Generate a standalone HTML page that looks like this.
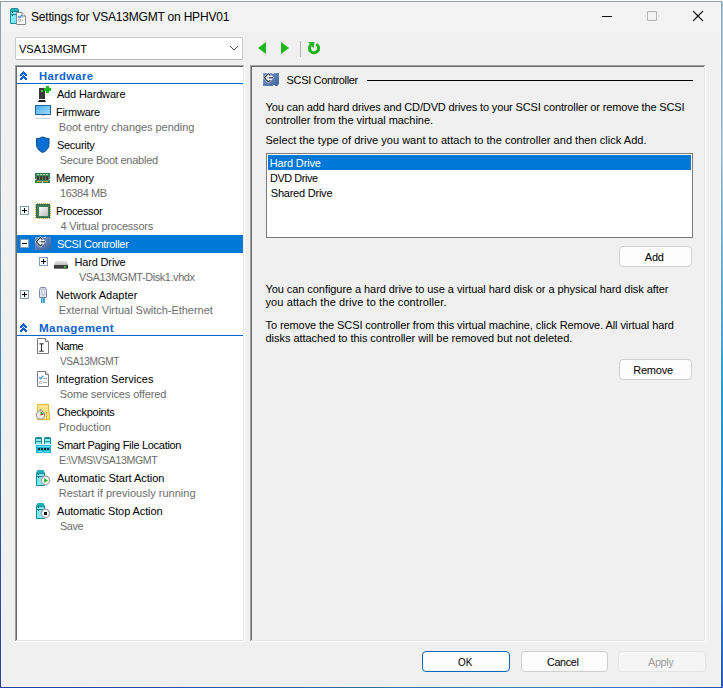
<!DOCTYPE html>
<html><head><meta charset="utf-8"><style>
html,body{margin:0;padding:0;width:723px;height:688px;overflow:hidden;background:#fff;}
body{position:relative;font-family:"Liberation Sans", sans-serif;}
.t{position:absolute;white-space:pre;font-family:"Liberation Sans", sans-serif;}
svg{position:absolute;overflow:visible}
</style></head><body>
<div style="position:absolute;left:0px;top:1px;width:722px;height:687px;background:#f0f0f0"></div>
<div style="position:absolute;left:2px;top:3px;width:718px;height:29px;background:#f3f3f3"></div>
<div style="position:absolute;left:0px;top:1px;width:722px;height:1px;background:#8aa4b4"></div>
<div style="position:absolute;left:0px;top:1px;width:1px;height:687px;background:linear-gradient(#8aa4b4 0px,#8a9cb0 150px,#3080c0 400px,#2850a0 550px,#2040a0 687px)"></div>
<div style="position:absolute;left:721px;top:1px;width:1px;height:687px;background:linear-gradient(#8aa4b4 0px,#98b0c0 150px,#3090c0 400px,#3070b8 600px,#2050a8 687px)"></div>
<div style="position:absolute;left:0px;top:687px;width:722px;height:1px;background:linear-gradient(90deg,#2040a0 0px,#2850a0 200px,#3068a0 350px,#3080b8 500px,#3870c0 650px,#2850a8 722px)"></div>
<div style="position:absolute;left:722px;top:0px;width:1px;height:688px;background:linear-gradient(#ffffff 0px,#ffffff 1px,#a8cce4 2px,#b0d4ec 150px,#10a0e8 400px,#2080e0 600px,#3060c0 688px)"></div>
<div style="position:absolute;left:1px;top:2px;width:720px;height:1px;background:#f8f6f4"></div>
<div style="position:absolute;left:1px;top:2px;width:1px;height:685px;background:#f8f6f4"></div>
<div style="position:absolute;left:720px;top:2px;width:1px;height:685px;background:#f8f6f4"></div>
<div style="position:absolute;left:1px;top:686px;width:720px;height:1px;background:#f8f6f4"></div>
<svg style="left:0;top:0" width="723" height="688" viewBox="0 0 723 688">
<path d="M10.5 10 L11.5 8.5 H17.5 L18.5 10 V23.5 H10.5 Z" fill="#7fe8f4" stroke="#178c94" stroke-width="1"/>
<rect x="11" y="9" width="7" height="2" fill="#23b0b8"/>
<rect x="11" y="11" width="7" height="1" fill="#178c94"/>
<rect x="11" y="14" width="7" height="1" fill="#178c94"/>
<rect x="12" y="12" width="1" height="1" fill="#0c4a50"/>
<rect x="12" y="15" width="1" height="1" fill="#0c4a50"/>
<path d="M16.5 12.5 H22 L25.5 16 V24.5 H16.5 Z" fill="#fff" stroke="#8a8a8a" stroke-width="1"/>
<path d="M22 12.5 V16 H25.5" fill="#eee" stroke="#8a8a8a" stroke-width="1"/>
<path d="M18.2 16.2 L19.6 17.8 L22 15" fill="none" stroke="#3a8ee6" stroke-width="1.4"/>
<rect x="18.5" y="19.5" width="2" height="2" fill="none" stroke="#c4c4c4" stroke-width="1"/>
<rect x="22" y="17" width="1" height="1" fill="#aaa"/><rect x="22" y="20" width="1" height="1" fill="#aaa"/>
</svg>
<div class="t" style="left:31.00px;top:10.84px;font-size:12px;line-height:12px;color:#000;font-weight:normal;letter-spacing:-0.200px;">Settings for VSA13MGMT on HPHV01</div>
<div style="position:absolute;left:602px;top:16px;width:10px;height:1px;background:#111"></div>
<div style="position:absolute;left:647px;top:11px;width:10px;height:10px;box-sizing:border-box;border:1px solid #b4b4b4;border-radius:1px"></div>
<svg style="left:692px;top:10px" width="12" height="12" viewBox="0 0 12 12">
<path d="M1 1 L11 11 M11 1 L1 11" stroke="#111" stroke-width="1.1" fill="none"/>
</svg>
<div style="position:absolute;left:15px;top:37px;width:228px;height:23px;box-sizing:border-box;background:#fff;border:1px solid #cacaca;border-bottom-color:#b8b8b8;border-radius:2px"></div>
<div class="t" style="left:19.00px;top:43.69px;font-size:11px;line-height:11px;color:#000;font-weight:normal;letter-spacing:0.000px;">VSA13MGMT</div>
<svg style="left:229px;top:45px" width="10" height="7" viewBox="0 0 10 7">
<path d="M1 1 L5 5 L9 1" stroke="#555" stroke-width="1" fill="none"/>
</svg>
<svg style="left:257px;top:42px" width="10" height="12" viewBox="0 0 10 12">
<path d="M1 6 L9 0 L9 12 Z" fill="#1db51d"/>
</svg>
<svg style="left:281px;top:42px" width="10" height="12" viewBox="0 0 10 12">
<path d="M0 0 L8 6 L0 12 Z" fill="#1db51d"/>
</svg>
<div style="position:absolute;left:300px;top:41px;width:1px;height:16px;background:#b4b4b4"></div>
<svg style="left:0;top:0" width="723" height="688" viewBox="0 0 723 688">
<path d="M316.3 44.2 A4.6 4.6 0 1 1 311.2 44.6" stroke="#1ab41a" stroke-width="3" fill="none"/>
<path d="M308 42 L314.4 42 L313.8 48.2 Z" fill="#1eba1e"/>
</svg>
<div style="position:absolute;left:15px;top:65px;width:230px;height:577px;background:#fff"></div>
<div style="position:absolute;left:15px;top:65px;width:229px;height:1px;background:#a0a0a0"></div>
<div style="position:absolute;left:15px;top:65px;width:1px;height:576px;background:#a0a0a0"></div>
<div style="position:absolute;left:16px;top:66px;width:227px;height:1px;background:#696969"></div>
<div style="position:absolute;left:16px;top:66px;width:1px;height:574px;background:#696969"></div>
<div style="position:absolute;left:244px;top:65px;width:1px;height:577px;background:#fff"></div>
<div style="position:absolute;left:15px;top:641px;width:230px;height:1px;background:#fff"></div>
<div style="position:absolute;left:243px;top:66px;width:1px;height:575px;background:#e3e3e3"></div>
<div style="position:absolute;left:16px;top:640px;width:228px;height:1px;background:#e3e3e3"></div>
<div style="position:absolute;left:250px;top:65px;width:1px;height:576px;background:#a0a0a0"></div>
<div style="position:absolute;left:250px;top:65px;width:455px;height:1px;background:#a0a0a0"></div>
<div style="position:absolute;left:251px;top:66px;width:1px;height:574px;background:#696969"></div>
<div style="position:absolute;left:251px;top:66px;width:453px;height:1px;background:#696969"></div>
<div style="position:absolute;left:705px;top:65px;width:1px;height:577px;background:#fff"></div>
<div style="position:absolute;left:250px;top:641px;width:456px;height:1px;background:#fff"></div>
<div style="position:absolute;left:704px;top:66px;width:1px;height:575px;background:#e3e3e3"></div>
<div style="position:absolute;left:251px;top:640px;width:454px;height:1px;background:#e3e3e3"></div>
<div style="position:absolute;left:17px;top:83px;width:226px;height:1px;background:#0066cc"></div>
<div style="position:absolute;left:17px;top:335px;width:226px;height:1px;background:#0066cc"></div>
<div style="position:absolute;left:17px;top:235px;width:226px;height:18px;background:#0078d7"></div>
<div class="t" style="left:38.50px;top:70.69px;font-size:11px;line-height:11px;color:#0a62d0;font-weight:bold;letter-spacing:0.400px;transform:scaleX(1.0189);transform-origin:0 0;">Hardware</div>
<div class="t" style="left:38.50px;top:322.69px;font-size:11px;line-height:11px;color:#0a62d0;font-weight:bold;letter-spacing:0.400px;transform:scaleX(1.0524);transform-origin:0 0;">Management</div>
<div class="t" style="left:56.90px;top:88.69px;font-size:11px;line-height:11px;color:#000;font-weight:normal;letter-spacing:-0.155px;">Add Hardware</div>
<div class="t" style="left:55.90px;top:106.69px;font-size:11px;line-height:11px;color:#000;font-weight:normal;letter-spacing:-0.229px;">Firmware</div>
<div class="t" style="left:58.70px;top:121.69px;font-size:11px;line-height:11px;color:#6d6d6d;font-weight:normal;letter-spacing:-0.052px;">Boot entry changes pending</div>
<div class="t" style="left:56.90px;top:139.69px;font-size:11px;line-height:11px;color:#000;font-weight:normal;letter-spacing:-0.257px;">Security</div>
<div class="t" style="left:59.70px;top:154.69px;font-size:11px;line-height:11px;color:#6d6d6d;font-weight:normal;letter-spacing:-0.239px;">Secure Boot enabled</div>
<div class="t" style="left:55.90px;top:172.69px;font-size:11px;line-height:11px;color:#000;font-weight:normal;letter-spacing:-0.320px;">Memory</div>
<div class="t" style="left:59.51px;top:187.69px;font-size:11px;line-height:11px;color:#6d6d6d;font-weight:normal;letter-spacing:-0.400px;transform:scaleX(0.9935);transform-origin:0 0;">16384 MB</div>
<div class="t" style="left:55.90px;top:205.69px;font-size:11px;line-height:11px;color:#000;font-weight:normal;letter-spacing:-0.350px;">Processor</div>
<div class="t" style="left:60.50px;top:220.69px;font-size:11px;line-height:11px;color:#6d6d6d;font-weight:normal;letter-spacing:-0.226px;">4 Virtual processors</div>
<div class="t" style="left:56.90px;top:238.69px;font-size:11px;line-height:11px;color:#fff;font-weight:normal;letter-spacing:-0.321px;">SCSI Controller</div>
<div class="t" style="left:74.40px;top:256.69px;font-size:11px;line-height:11px;color:#000;font-weight:normal;letter-spacing:-0.144px;">Hard Drive</div>
<div class="t" style="left:79.00px;top:271.69px;font-size:11px;line-height:11px;color:#6d6d6d;font-weight:normal;letter-spacing:-0.400px;transform:scaleX(0.9898);transform-origin:0 0;">VSA13MGMT-Disk1.vhdx</div>
<div class="t" style="left:55.90px;top:289.69px;font-size:11px;line-height:11px;color:#000;font-weight:normal;letter-spacing:0.007px;">Network Adapter</div>
<div class="t" style="left:58.70px;top:304.69px;font-size:11px;line-height:11px;color:#6d6d6d;font-weight:normal;letter-spacing:-0.032px;">External Virtual Switch-Ethernet</div>
<div class="t" style="left:55.92px;top:340.69px;font-size:11px;line-height:11px;color:#000;font-weight:normal;letter-spacing:-0.400px;transform:scaleX(0.9813);transform-origin:0 0;">Name</div>
<div class="t" style="left:59.70px;top:355.69px;font-size:11px;line-height:11px;color:#6d6d6d;font-weight:normal;letter-spacing:-0.400px;transform:scaleX(0.9182);transform-origin:0 0;">VSA13MGMT</div>
<div class="t" style="left:55.90px;top:373.69px;font-size:11px;line-height:11px;color:#000;font-weight:normal;letter-spacing:0.016px;">Integration Services</div>
<div class="t" style="left:59.70px;top:388.69px;font-size:11px;line-height:11px;color:#6d6d6d;font-weight:normal;letter-spacing:-0.125px;">Some services offered</div>
<div class="t" style="left:56.90px;top:406.69px;font-size:11px;line-height:11px;color:#000;font-weight:normal;letter-spacing:-0.270px;">Checkpoints</div>
<div class="t" style="left:58.70px;top:421.69px;font-size:11px;line-height:11px;color:#6d6d6d;font-weight:normal;letter-spacing:-0.044px;">Production</div>
<div class="t" style="left:56.90px;top:439.69px;font-size:11px;line-height:11px;color:#000;font-weight:normal;letter-spacing:-0.300px;">Smart Paging File Location</div>
<div class="t" style="left:58.73px;top:454.69px;font-size:11px;line-height:11px;color:#6d6d6d;font-weight:normal;letter-spacing:-0.400px;transform:scaleX(0.9663);transform-origin:0 0;">E:\VMS\VSA13MGMT</div>
<div class="t" style="left:56.90px;top:472.69px;font-size:11px;line-height:11px;color:#000;font-weight:normal;letter-spacing:-0.033px;">Automatic Start Action</div>
<div class="t" style="left:58.70px;top:487.69px;font-size:11px;line-height:11px;color:#6d6d6d;font-weight:normal;letter-spacing:0.018px;">Restart if previously running</div>
<div class="t" style="left:56.90px;top:505.69px;font-size:11px;line-height:11px;color:#000;font-weight:normal;letter-spacing:-0.095px;">Automatic Stop Action</div>
<div class="t" style="left:59.70px;top:520.69px;font-size:11px;line-height:11px;color:#6d6d6d;font-weight:normal;letter-spacing:-0.400px;transform:scaleX(0.9874);transform-origin:0 0;">Save</div>
<div class="t" style="left:286.60px;top:74.69px;font-size:11px;line-height:11px;color:#000;font-weight:normal;letter-spacing:-0.343px;">SCSI Controller</div>
<div style="position:absolute;left:367px;top:80px;width:326px;height:1px;background:#000"></div>
<div class="t" style="left:265.50px;top:101.69px;font-size:11px;line-height:11px;color:#000;font-weight:normal;letter-spacing:-0.139px;">You can add hard drives and CD/DVD drives to your SCSI controller or remove the SCSI</div>
<div class="t" style="left:265.50px;top:114.69px;font-size:11px;line-height:11px;color:#000;font-weight:normal;letter-spacing:-0.034px;">controller from the virtual machine.</div>
<div class="t" style="left:265.50px;top:134.69px;font-size:11px;line-height:11px;color:#000;font-weight:normal;letter-spacing:0.031px;">Select the type of drive you want to attach to the controller and then click Add.</div>
<div style="position:absolute;left:266px;top:153px;width:427px;height:85px;box-sizing:border-box;background:#fff;border:1px solid #7a7a7a"></div>
<div style="position:absolute;left:268px;top:155px;width:423px;height:15px;background:#0078d7"></div>
<div class="t" style="left:269.80px;top:157.69px;font-size:11px;line-height:11px;color:#fff;font-weight:normal;letter-spacing:-0.167px;">Hard Drive</div>
<div class="t" style="left:269.81px;top:172.69px;font-size:11px;line-height:11px;color:#000;font-weight:normal;letter-spacing:-0.400px;transform:scaleX(0.9854);transform-origin:0 0;">DVD Drive</div>
<div class="t" style="left:270.80px;top:187.69px;font-size:11px;line-height:11px;color:#000;font-weight:normal;letter-spacing:-0.227px;">Shared Drive</div>
<div style="position:absolute;left:619px;top:246px;width:73px;height:21px;box-sizing:border-box;background:#fdfdfd;border:1px solid #d0d0d0;border-radius:4px"></div>
<div class="t" style="left:644.80px;top:251.69px;font-size:11px;line-height:11px;color:#000;font-weight:normal;letter-spacing:-0.250px;">Add</div>
<div class="t" style="left:265.50px;top:283.69px;font-size:11px;line-height:11px;color:#000;font-weight:normal;letter-spacing:-0.067px;">You can configure a hard drive to use a virtual hard disk or a physical hard disk after</div>
<div class="t" style="left:265.50px;top:296.69px;font-size:11px;line-height:11px;color:#000;font-weight:normal;letter-spacing:0.095px;">you attach the drive to the controller.</div>
<div class="t" style="left:265.50px;top:319.69px;font-size:11px;line-height:11px;color:#000;font-weight:normal;letter-spacing:-0.085px;">To remove the SCSI controller from this virtual machine, click Remove. All virtual hard</div>
<div class="t" style="left:265.50px;top:332.69px;font-size:11px;line-height:11px;color:#000;font-weight:normal;letter-spacing:-0.040px;">disks attached to this controller will be removed but not deleted.</div>
<div style="position:absolute;left:619px;top:359px;width:73px;height:21px;box-sizing:border-box;background:#fdfdfd;border:1px solid #d0d0d0;border-radius:4px"></div>
<div class="t" style="left:633.20px;top:364.69px;font-size:11px;line-height:11px;color:#000;font-weight:normal;letter-spacing:-0.200px;">Remove</div>
<div style="position:absolute;left:422px;top:651px;width:88px;height:21px;box-sizing:border-box;background:#fdfdfd;border:1px solid #0067c0;border-radius:4px"></div>
<div class="t" style="left:457.60px;top:656.69px;font-size:11px;line-height:11px;color:#000;font-weight:normal;letter-spacing:0.000px;transform:scaleX(0.9);transform-origin:0 0">OK</div>
<div style="position:absolute;left:521px;top:651px;width:87px;height:21px;box-sizing:border-box;background:#fdfdfd;border:1px solid #d0d0d0;border-radius:4px"></div>
<div class="t" style="left:546.50px;top:656.69px;font-size:11px;line-height:11px;color:#000;font-weight:normal;letter-spacing:-0.400px;transform:scaleX(0.9875);transform-origin:0 0;">Cancel</div>
<div style="position:absolute;left:618px;top:651px;width:88px;height:21px;box-sizing:border-box;background:#f5f5f5;border:1px solid #e5e5e5;border-radius:4px"></div>
<div class="t" style="left:648.00px;top:656.69px;font-size:11px;line-height:11px;color:#a0a0a0;font-weight:normal;letter-spacing:-0.400px;transform:scaleX(0.9924);transform-origin:0 0;">Apply</div>
<svg style="left:0;top:0" width="723" height="688" viewBox="0 0 723 688"><defs>
<linearGradient id="gscsi" x1="0" y1="0" x2="1" y2="1"><stop offset="0" stop-color="#86a8d8"/><stop offset="1" stop-color="#3c5e96"/></linearGradient>
<linearGradient id="gmon" x1="0" y1="0" x2="1" y2="1"><stop offset="0" stop-color="#4fb0ee"/><stop offset="1" stop-color="#9ad9ff"/></linearGradient>
<linearGradient id="gcpu" x1="0" y1="0" x2="1" y2="1"><stop offset="0" stop-color="#fafafa"/><stop offset="1" stop-color="#bdbdbd"/></linearGradient>
<linearGradient id="ghd" x1="0" y1="0" x2="0" y2="1"><stop offset="0" stop-color="#e6e6e6"/><stop offset="1" stop-color="#9a9a9a"/></linearGradient>
</defs><g shape-rendering="crispEdges"><rect x="23" y="71" width="1" height="1" fill="#0c62d6"/><rect x="22" y="72" width="1" height="1" fill="#0c62d6"/><rect x="23" y="72" width="1" height="1" fill="#0c62d6"/><rect x="24" y="72" width="1" height="1" fill="#0c62d6"/><rect x="21" y="73" width="1" height="1" fill="#0c62d6"/><rect x="22" y="73" width="1" height="1" fill="#0c62d6"/><rect x="23" y="73" width="1" height="1" fill="#0c62d6"/><rect x="24" y="73" width="1" height="1" fill="#0c62d6"/><rect x="25" y="73" width="1" height="1" fill="#0c62d6"/><rect x="20" y="74" width="1" height="1" fill="#0c62d6"/><rect x="21" y="74" width="1" height="1" fill="#0c62d6"/><rect x="22" y="74" width="1" height="1" fill="#0c62d6"/><rect x="24" y="74" width="1" height="1" fill="#0c62d6"/><rect x="25" y="74" width="1" height="1" fill="#0c62d6"/><rect x="26" y="74" width="1" height="1" fill="#0c62d6"/><rect x="20" y="75" width="1" height="1" fill="#0c62d6"/><rect x="21" y="75" width="1" height="1" fill="#0c62d6"/><rect x="23" y="75" width="1" height="1" fill="#0c62d6"/><rect x="25" y="75" width="1" height="1" fill="#0c62d6"/><rect x="26" y="75" width="1" height="1" fill="#0c62d6"/><rect x="22" y="76" width="1" height="1" fill="#0c62d6"/><rect x="23" y="76" width="1" height="1" fill="#0c62d6"/><rect x="24" y="76" width="1" height="1" fill="#0c62d6"/><rect x="21" y="77" width="1" height="1" fill="#0c62d6"/><rect x="22" y="77" width="1" height="1" fill="#0c62d6"/><rect x="23" y="77" width="1" height="1" fill="#0c62d6"/><rect x="24" y="77" width="1" height="1" fill="#0c62d6"/><rect x="25" y="77" width="1" height="1" fill="#0c62d6"/><rect x="20" y="78" width="1" height="1" fill="#0c62d6"/><rect x="21" y="78" width="1" height="1" fill="#0c62d6"/><rect x="22" y="78" width="1" height="1" fill="#0c62d6"/><rect x="24" y="78" width="1" height="1" fill="#0c62d6"/><rect x="25" y="78" width="1" height="1" fill="#0c62d6"/><rect x="26" y="78" width="1" height="1" fill="#0c62d6"/><rect x="20" y="79" width="1" height="1" fill="#0c62d6"/><rect x="21" y="79" width="1" height="1" fill="#0c62d6"/><rect x="25" y="79" width="1" height="1" fill="#0c62d6"/><rect x="26" y="79" width="1" height="1" fill="#0c62d6"/></g><g shape-rendering="crispEdges"><rect x="23" y="323" width="1" height="1" fill="#0c62d6"/><rect x="22" y="324" width="1" height="1" fill="#0c62d6"/><rect x="23" y="324" width="1" height="1" fill="#0c62d6"/><rect x="24" y="324" width="1" height="1" fill="#0c62d6"/><rect x="21" y="325" width="1" height="1" fill="#0c62d6"/><rect x="22" y="325" width="1" height="1" fill="#0c62d6"/><rect x="23" y="325" width="1" height="1" fill="#0c62d6"/><rect x="24" y="325" width="1" height="1" fill="#0c62d6"/><rect x="25" y="325" width="1" height="1" fill="#0c62d6"/><rect x="20" y="326" width="1" height="1" fill="#0c62d6"/><rect x="21" y="326" width="1" height="1" fill="#0c62d6"/><rect x="22" y="326" width="1" height="1" fill="#0c62d6"/><rect x="24" y="326" width="1" height="1" fill="#0c62d6"/><rect x="25" y="326" width="1" height="1" fill="#0c62d6"/><rect x="26" y="326" width="1" height="1" fill="#0c62d6"/><rect x="20" y="327" width="1" height="1" fill="#0c62d6"/><rect x="21" y="327" width="1" height="1" fill="#0c62d6"/><rect x="23" y="327" width="1" height="1" fill="#0c62d6"/><rect x="25" y="327" width="1" height="1" fill="#0c62d6"/><rect x="26" y="327" width="1" height="1" fill="#0c62d6"/><rect x="22" y="328" width="1" height="1" fill="#0c62d6"/><rect x="23" y="328" width="1" height="1" fill="#0c62d6"/><rect x="24" y="328" width="1" height="1" fill="#0c62d6"/><rect x="21" y="329" width="1" height="1" fill="#0c62d6"/><rect x="22" y="329" width="1" height="1" fill="#0c62d6"/><rect x="23" y="329" width="1" height="1" fill="#0c62d6"/><rect x="24" y="329" width="1" height="1" fill="#0c62d6"/><rect x="25" y="329" width="1" height="1" fill="#0c62d6"/><rect x="20" y="330" width="1" height="1" fill="#0c62d6"/><rect x="21" y="330" width="1" height="1" fill="#0c62d6"/><rect x="22" y="330" width="1" height="1" fill="#0c62d6"/><rect x="24" y="330" width="1" height="1" fill="#0c62d6"/><rect x="25" y="330" width="1" height="1" fill="#0c62d6"/><rect x="26" y="330" width="1" height="1" fill="#0c62d6"/><rect x="20" y="331" width="1" height="1" fill="#0c62d6"/><rect x="21" y="331" width="1" height="1" fill="#0c62d6"/><rect x="25" y="331" width="1" height="1" fill="#0c62d6"/><rect x="26" y="331" width="1" height="1" fill="#0c62d6"/></g><rect x="39" y="88" width="6" height="11" fill="#383838"/><rect x="41" y="90" width="2" height="2" fill="#3ce03c"/><path d="M39 100 H45 L46 102 H38 Z" fill="#1e1e1e"/><rect x="44" y="88" width="7" height="3" fill="#14b814"/><rect x="46" y="86" width="3" height="7" fill="#14b814"/><rect x="35" y="105" width="16" height="10" fill="#23649c"/><rect x="36" y="106" width="14" height="8" fill="url(#gmon)"/><rect x="42" y="115" width="2" height="1" fill="#b8c4d0"/><rect x="36" y="118" width="14" height="1" fill="#c6d2de"/><path d="M36.5 138.6 Q39.5 138.6 42.75 136.9 Q46 138.6 49 138.6 V144.5 Q49 149.5 42.75 152.6 Q36.5 149.5 36.5 144.5 Z" fill="#0a6fd0" stroke="#0b4a8c" stroke-width="1"/><rect x="35" y="173" width="15" height="10" fill="#3c8e5c"/><rect x="35.5" y="173.5" width="14" height="9" fill="none" stroke="#2f7a4c" stroke-width="1"/><rect x="37" y="176" width="2" height="4" fill="#4a3838"/><rect x="37" y="174" width="2" height="1" fill="#c4d2b8"/><rect x="40" y="176" width="2" height="4" fill="#4a3838"/><rect x="40" y="174" width="2" height="1" fill="#c4d2b8"/><rect x="43" y="176" width="2" height="4" fill="#4a3838"/><rect x="43" y="174" width="2" height="1" fill="#c4d2b8"/><rect x="46" y="176" width="2" height="4" fill="#4a3838"/><rect x="46" y="174" width="2" height="1" fill="#c4d2b8"/><rect x="37" y="181" width="4" height="1" fill="#e8a040"/><rect x="44" y="181" width="4" height="1" fill="#e8a040"/><rect x="42" y="181" width="1" height="2" fill="#fff"/><rect x="35" y="179" width="1" height="1" fill="#fff"/><rect x="49" y="179" width="1" height="1" fill="#fff"/><rect x="20.5" y="206.5" width="8" height="8" fill="#fff" stroke="#7f9db9" stroke-width="1"/><rect x="22" y="210" width="5" height="1" fill="#000"/><rect x="24" y="208" width="1" height="5" fill="#000"/><rect x="36" y="204" width="14" height="14" fill="#2e6e4c"/><rect x="37" y="205" width="12" height="12" fill="#3a7e5a"/><rect x="39" y="207" width="9" height="9" fill="url(#gcpu)"/><rect x="37" y="203" width="1" height="1" fill="#d8a030"/><rect x="37" y="218" width="1" height="1" fill="#d8a030"/><rect x="35" y="205" width="1" height="1" fill="#d8a030"/><rect x="50" y="205" width="1" height="1" fill="#d8a030"/><rect x="39" y="203" width="1" height="1" fill="#d8a030"/><rect x="39" y="218" width="1" height="1" fill="#d8a030"/><rect x="35" y="207" width="1" height="1" fill="#d8a030"/><rect x="50" y="207" width="1" height="1" fill="#d8a030"/><rect x="41" y="203" width="1" height="1" fill="#d8a030"/><rect x="41" y="218" width="1" height="1" fill="#d8a030"/><rect x="35" y="209" width="1" height="1" fill="#d8a030"/><rect x="50" y="209" width="1" height="1" fill="#d8a030"/><rect x="43" y="203" width="1" height="1" fill="#d8a030"/><rect x="43" y="218" width="1" height="1" fill="#d8a030"/><rect x="35" y="211" width="1" height="1" fill="#d8a030"/><rect x="50" y="211" width="1" height="1" fill="#d8a030"/><rect x="45" y="203" width="1" height="1" fill="#d8a030"/><rect x="45" y="218" width="1" height="1" fill="#d8a030"/><rect x="35" y="213" width="1" height="1" fill="#d8a030"/><rect x="50" y="213" width="1" height="1" fill="#d8a030"/><rect x="47" y="203" width="1" height="1" fill="#d8a030"/><rect x="47" y="218" width="1" height="1" fill="#d8a030"/><rect x="35" y="215" width="1" height="1" fill="#d8a030"/><rect x="50" y="215" width="1" height="1" fill="#d8a030"/><rect x="49" y="203" width="1" height="1" fill="#d8a030"/><rect x="49" y="218" width="1" height="1" fill="#d8a030"/><rect x="35" y="217" width="1" height="1" fill="#d8a030"/><rect x="50" y="217" width="1" height="1" fill="#d8a030"/><rect x="20.5" y="239.5" width="8" height="8" fill="#fff" stroke="#7f9db9" stroke-width="1"/><rect x="22" y="243" width="5" height="1" fill="#000"/><path d="M35 237 H51 V248 L49 250 H47 V249 H45 V250 H35 Z" fill="url(#gscsi)"/><rect x="36.5" y="238.5" width="12" height="10" fill="none" stroke="#4a6ca4" stroke-width="1" opacity="0.5"/><rect x="44" y="237" width="2" height="1" fill="#c8d0d8"/><path d="M40.4 236.2 L45.8 241.8 L40.4 247.4 L35 241.8 Z" fill="#fff" opacity="0.92"/><path d="M39.3 241.8 H40.6" stroke="#7898c8" stroke-width="1.2"/><path d="M40.4 237.5 L36.4 241.8 L40.4 246.1 M40.4 237.5 L42.4 239.6 M40.4 246.1 L42.4 244" fill="none" stroke="#222" stroke-width="1.05"/><path d="M41 241.8 H45" stroke="#222" stroke-width="1.1"/><rect x="39.5" y="257.5" width="8" height="8" fill="#fff" stroke="#7f9db9" stroke-width="1"/><rect x="41" y="261" width="5" height="1" fill="#000"/><rect x="43" y="259" width="1" height="5" fill="#000"/><path d="M55.5 261 H66.5 L68 264.5 V268 Q68 268.6 67.4 268.6 H54.6 Q54 268.6 54 268 V264.5 Z" fill="url(#ghd)"/><rect x="54" y="265" width="14" height="3.6" fill="#3e3e3e"/><rect x="64" y="266" width="2" height="1.5" fill="#30e030"/><rect x="20.5" y="290.5" width="8" height="8" fill="#fff" stroke="#7f9db9" stroke-width="1"/><rect x="22" y="294" width="5" height="1" fill="#000"/><rect x="24" y="292" width="1" height="5" fill="#000"/><path d="M39.5 290.5 Q39.5 288 41 287.5 H45 Q46.5 288 46.5 290.5 V297.5 H39.5 Z" fill="#dde4f0" stroke="#7a88a8" stroke-width="1"/><rect x="42" y="289" width="2" height="6" fill="#fff" stroke="#8a98b8" stroke-width="0.6"/><rect x="41" y="298" width="4" height="5" fill="#3aa0e0"/><rect x="42" y="298" width="1" height="5" fill="#80c8f0"/><path d="M37.5 338.5 H45.5 L48.5 341.5 V353.5 H37.5 Z" fill="#fff" stroke="#7a7a7a" stroke-width="1"/><path d="M45.5 338.5 V341.5 H48.5" fill="#f0f0f0" stroke="#7a7a7a" stroke-width="1"/><path d="M39.3 344 Q41.5 343.2 41.5 345 V350 Q41.5 351.8 39.3 351 M43.7 344 Q41.5 343.2 41.5 345 M43.7 351 Q41.5 351.8 41.5 350" fill="none" stroke="#333" stroke-width="1.1"/><path d="M37.5 371.5 H45.5 L48.5 374.5 V386.5 H37.5 Z" fill="#fff" stroke="#7a7a7a" stroke-width="1"/><path d="M45.5 371.5 V374.5 H48.5" fill="#f0f0f0" stroke="#7a7a7a" stroke-width="1"/><path d="M39.2 377.2 L40.6 378.7 L43.2 375.8" fill="none" stroke="#3d95ea" stroke-width="1.35"/><rect x="43" y="378" width="4" height="1" fill="#ababab"/><rect x="43" y="382" width="4" height="1" fill="#ababab"/><rect x="39.5" y="381.5" width="2" height="2" fill="none" stroke="#c6c6c6" stroke-width="1"/><rect x="37.5" y="404.5" width="11" height="15" fill="#fde48c" stroke="#e3bb3c" stroke-width="1"/><rect x="46.5" y="412.5" width="3" height="7" fill="#fde48c" stroke="#e3bb3c" stroke-width="1"/><circle cx="40.5" cy="415" r="4.2" fill="#ececec" stroke="#8a8a8a" stroke-width="1"/><rect x="39.5" y="409" width="2" height="1.5" fill="#9aa4b0"/><path d="M40.5 415 L40.5 411.5 L44 413.5 Z" fill="#28b828"/><path d="M40.5 415 L43.5 414" stroke="#d02020" stroke-width="1"/><path d="M35 438.5 Q35 437 36.5 437 H40.5 Q42 437 42 438.5 V444 H35 Z" fill="#168a92"/><rect x="36" y="439" width="5" height="2" fill="#86f2fa"/><rect x="36" y="442" width="5" height="2" fill="#86f2fa"/><path d="M44 438.5 Q44 437 45.5 437 H49.5 Q51 437 51 438.5 V444 H44 Z" fill="#168a92"/><rect x="45" y="439" width="5" height="2" fill="#86f2fa"/><rect x="45" y="442" width="5" height="2" fill="#86f2fa"/><rect x="36" y="445" width="15" height="8" fill="#18b8d8"/><rect x="37" y="446" width="13" height="1" fill="#70e0f4"/><rect x="38" y="448" width="2" height="2" fill="#06222e"/><rect x="41" y="448" width="2" height="2" fill="#06222e"/><rect x="44" y="448" width="2" height="2" fill="#06222e"/><rect x="47" y="448" width="2" height="2" fill="#06222e"/><rect x="38" y="451" width="4" height="1" fill="#70e0f4"/><rect x="45" y="451" width="4" height="1" fill="#70e0f4"/><rect x="43" y="452" width="1" height="1" fill="#fff"/><path d="M36.5 473 V485.5 H44.5 V473 Z" fill="#7ee8f4" stroke="#168890" stroke-width="1"/><path d="M36 473 L37.5 470 H43.5 L45 473 Z" fill="#22aeb6"/><rect x="37" y="473" width="7" height="1" fill="#168890"/><rect x="37" y="476" width="7" height="1" fill="#168890"/><rect x="38" y="474" width="1" height="1" fill="#0e5a60"/><rect x="38" y="477" width="1" height="1" fill="#0e5a60"/><circle cx="45.5" cy="480.4" r="4.1" fill="#fff" stroke="#a8a8a8" stroke-width="1.5"/><path d="M44.2 478 L48 480.5 L44.2 483 Z" fill="#18b018"/><path d="M36.5 506 V518.5 H44.5 V506 Z" fill="#7ee8f4" stroke="#168890" stroke-width="1"/><path d="M36 506 L37.5 503 H43.5 L45 506 Z" fill="#22aeb6"/><rect x="37" y="506" width="7" height="1" fill="#168890"/><rect x="37" y="509" width="7" height="1" fill="#168890"/><rect x="38" y="507" width="1" height="1" fill="#0e5a60"/><rect x="38" y="510" width="1" height="1" fill="#0e5a60"/><circle cx="45.5" cy="513.4" r="4.1" fill="#fff" stroke="#a8a8a8" stroke-width="1.5"/><rect x="44" y="512" width="3" height="3" fill="#111"/><path d="M263 73 H279 V84 L277 86 H275 V85 H273 V86 H263 Z" fill="url(#gscsi)"/><rect x="264.5" y="74.5" width="12" height="10" fill="none" stroke="#4a6ca4" stroke-width="1" opacity="0.5"/><rect x="272" y="73" width="2" height="1" fill="#c8d0d8"/><path d="M268.4 72.2 L273.8 77.8 L268.4 83.4 L263 77.8 Z" fill="#fff" opacity="0.92"/><path d="M267.3 77.8 H268.6" stroke="#7898c8" stroke-width="1.2"/><path d="M268.4 73.5 L264.4 77.8 L268.4 82.1 M268.4 73.5 L270.4 75.6 M268.4 82.1 L270.4 80" fill="none" stroke="#222" stroke-width="1.05"/><path d="M269 77.8 H273" stroke="#222" stroke-width="1.1"/></svg>
</body></html>
